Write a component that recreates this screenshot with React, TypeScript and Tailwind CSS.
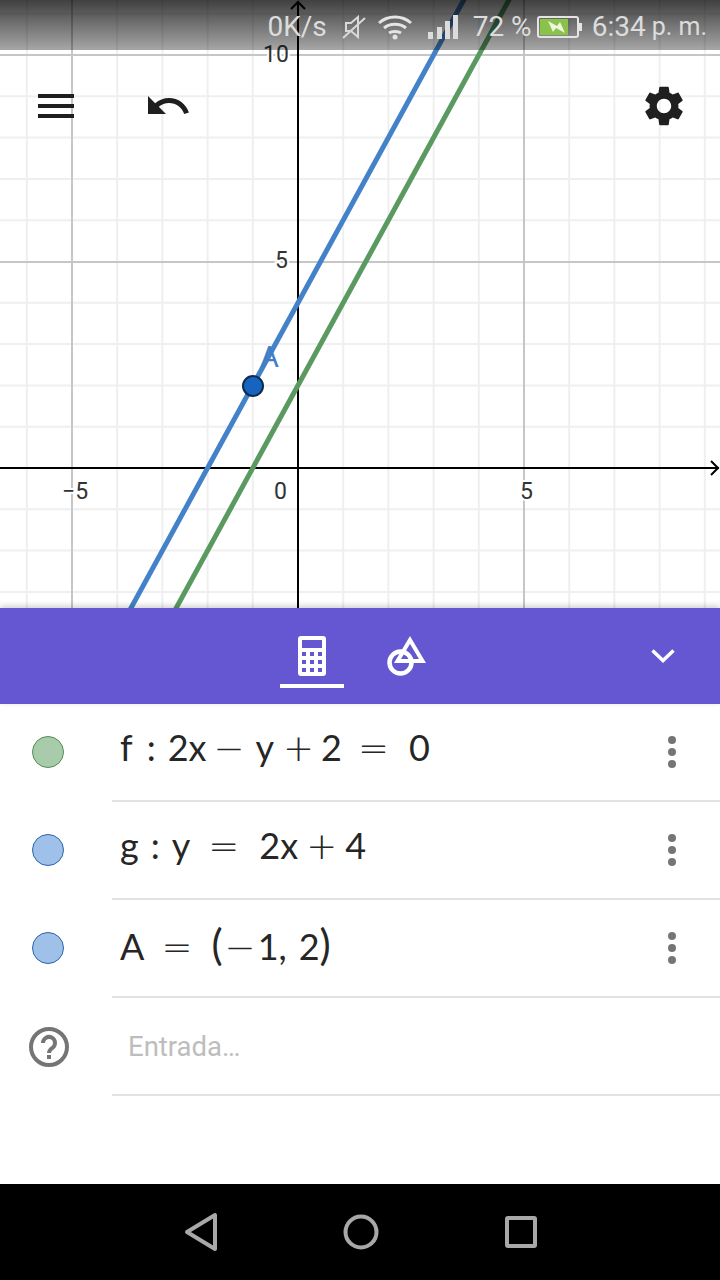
const xLines = [-6, -4, -3, -2, -1, 1, 2, 3, 4, 6, 7, 8, 9]
const yLines = [-3, -2, -1, 1, 2, 3, 4, 6, 7, 8, 9, 11]

const sx = (x: number) => 298 + x * 45.2
const sy = (y: number) => 468 - y * 41.3

const tick = 'fill-[#333] stroke-white stroke-[4px] [paint-order:stroke]'

function Graph() {
  return (
    <svg viewBox="0 0 720 608" className="block h-[608px] w-[720px]">
      {xLines.map((x) => (
        <line key={x} x1={sx(x)} x2={sx(x)} y1={0} y2={608} stroke="#efefef" strokeWidth={2} />
      ))}
      {yLines.map((y) => (
        <line key={y} x1={0} x2={720} y1={sy(y)} y2={sy(y)} stroke="#efefef" strokeWidth={2} />
      ))}
      <line x1={72} x2={72} y1={0} y2={608} stroke="#c6c6c6" strokeWidth={2} />
      <line x1={524} x2={524} y1={0} y2={608} stroke="#c6c6c6" strokeWidth={2} />
      <line x1={0} x2={720} y1={262} y2={262} stroke="#c6c6c6" strokeWidth={2} />
      <line x1={0} x2={720} y1={55} y2={55} stroke="#c6c6c6" strokeWidth={2} />
      <line x1={298} x2={298} y1={1} y2={608} stroke="#000" strokeWidth={2} />
      <line x1={0} x2={719} y1={468} y2={468} stroke="#000" strokeWidth={2} />
      <path d="M291 9l7-7 7 7M711 461l7 7-7 7" fill="none" stroke="#000" strokeWidth={2} />
      <line x1={sx(-3.75)} y1={sy(-3.5)} x2={sx(3.75)} y2={sy(11.5)} stroke="#4382c8" strokeWidth={5} />
      <line x1={sx(-2.75)} y1={sy(-3.5)} x2={sx(4.75)} y2={sy(11.5)} stroke="#5a9a60" strokeWidth={5} />
      <circle cx={253} cy={386} r={10} fill="#1565c0" stroke="#0d2b4f" strokeWidth={2} />
      <g fontFamily="Roboto, sans-serif" fontSize={23}>
        <text x={263} y={62} className={tick}>10</text>
        <text x={275} y={268} className={tick}>5</text>
        <text x={62} y={499} className={tick}>−5</text>
        <text x={274} y={499} className={tick}>0</text>
        <text x={520} y={499} className={tick}>5</text>
      </g>
      <text x={260} y={367} fontFamily="Roboto, sans-serif" fontSize={29} fill="#3f7fc7">A</text>
    </svg>
  )
}

function StatusBar() {
  return (
    <div className="absolute inset-x-0 top-0 flex h-[50px] items-center justify-end bg-gradient-to-b from-black/75 to-black/35 pr-[13px] pt-[3px] font-['Roboto',sans-serif] text-[28px] leading-none text-[#dcdcdc]">
      <span>0K/s</span>
      <svg viewBox="0 0 24 24" className="ml-[15px] h-6 w-6" fill="none" stroke="#d8d8d8" strokeWidth={2}>
        <path d="M4 8h5l7-6v20l-7-6H4zM1 23L23 3" />
      </svg>
      <svg viewBox="0 0 34 26" className="ml-[12px] h-[26px] w-[34px]" fill="none" stroke="#e4e4e4" strokeWidth={3}>
        <path d="M1 9c9-8 23-8 32 0M6 14c6-5 16-5 22 0M11 19c3-2 9-2 12 0" />
        <circle cx={17} cy={23} r={2.5} fill="#e4e4e4" stroke="none" />
      </svg>
      <svg viewBox="0 0 30 26" className="ml-[16px] h-[26px] w-[30px]" fill="#dcdcdc">
        <rect x={0} y={18} width={5} height={7} />
        <rect x={9} y={13} width={5} height={12} />
        <rect x={17} y={7} width={5} height={18} />
        <rect x={25} y={1} width={5} height={24} />
      </svg>
      <span className="ml-[15px]">72 %</span>
      <svg viewBox="0 0 45 22" className="ml-[5px] h-[22px] w-[45px]">
        <rect x={1} y={1} width={40} height={20} rx={2} fill="none" stroke="#e4e4e4" strokeWidth={2} />
        <rect x={3} y={3} width={28} height={16} fill="#8bc34a" />
        <rect x={42} y={7} width={3} height={8} fill="#e4e4e4" />
        <path d="M11 5l9 5 3-4 5 11-9-5-3 4z" fill="#eef5e0" />
      </svg>
      <span className="ml-[10px]">6:34</span>
      <span className="ml-[6px] text-[25px]">p. m.</span>
    </div>
  )
}

function Marble({ fill, border }: { fill: string; border: string }) {
  return <div className={`h-8 w-8 rounded-full border ${fill} ${border}`} />
}

function Kebab() {
  return (
    <div className="ml-auto mr-[44px] mt-[2px] flex flex-col gap-[4px]">
      <span className="h-2 w-2 rounded-full bg-[#757575]" />
      <span className="h-2 w-2 rounded-full bg-[#757575]" />
      <span className="h-2 w-2 rounded-full bg-[#757575]" />
    </div>
  )
}

function Row({ icon, children, kebab = true }: { icon: React.ReactNode; children: React.ReactNode; kebab?: boolean }) {
  return (
    <div className="flex h-[98px] items-center">
      <div className="flex w-[112px] shrink-0 justify-center pb-[2px] pr-[16px]">{icon}</div>
      <div className="flex h-full flex-1 items-center border-b-2 border-[#e2e2e2] pb-[2px]">
        {children}
        {kebab && <Kebab />}
      </div>
    </div>
  )
}

function Math({ children }: { children: React.ReactNode }) {
  return (
    <div className="mb-[6px] ml-[8px] flex items-baseline whitespace-pre font-['Lato',sans-serif] text-[36px] leading-none text-[#262626]">
      {children}
    </div>
  )
}

function Op({ c, l, r }: { c: string; l: string; r: string }) {
  return <span className={`${l} ${r} font-['DejaVu_Sans',sans-serif] text-[37px] font-extralight`}>{c}</span>
}

export default function App() {
  return (
    <div className="flex h-[1280px] w-[720px] flex-col overflow-hidden bg-white">
      <div className="relative h-[608px] shrink-0">
        <Graph />
        <StatusBar />
        <svg viewBox="0 0 36 24" className="absolute left-[38px] top-[94px] h-6 w-9" fill="#1f1f1f">
          <rect y={0} width={36} height={4} />
          <rect y={10} width={36} height={4} />
          <rect y={20} width={36} height={4} />
        </svg>
        <svg viewBox="0 0 24 24" className="absolute left-[144px] top-[82px] h-12 w-12" fill="#1f1f1f">
          <path d="M12.5 8c-2.65 0-5.05.99-6.9 2.6L2 7v9h9l-3.62-3.62c1.39-1.16 3.16-1.88 5.12-1.88 3.54 0 6.55 2.31 7.6 5.5l2.37-.78C21.08 11.03 17.15 8 12.5 8z" />
        </svg>
        <svg viewBox="0 0 24 24" className="absolute left-[640px] top-[82px] h-12 w-12" fill="#1f1f1f">
          <path d="M19.14 12.94c.04-.3.06-.61.06-.94 0-.32-.02-.64-.07-.94l2.03-1.58c.18-.14.23-.41.12-.61l-1.92-3.32c-.12-.22-.37-.29-.59-.22l-2.39.96c-.5-.38-1.03-.7-1.62-.94l-.36-2.54c-.04-.24-.24-.41-.48-.41h-3.84c-.24 0-.43.17-.47.41l-.36 2.54c-.59.24-1.13.57-1.62.94l-2.39-.96c-.22-.08-.47 0-.59.22L2.74 8.87c-.12.21-.08.47.12.61l2.03 1.58c-.05.3-.09.63-.09.94s.02.64.07.94l-2.03 1.58c-.18.14-.23.41-.12.61l1.92 3.32c.12.22.37.29.59.22l2.39-.96c.5.38 1.03.7 1.62.94l.36 2.54c.05.24.24.41.48.41h3.84c.24 0 .44-.17.47-.41l.36-2.54c.59-.24 1.13-.56 1.62-.94l2.39.96c.22.08.47 0 .59-.22l1.92-3.32c.12-.22.07-.47-.12-.61l-2.01-1.58zM12 15.6c-1.98 0-3.6-1.62-3.6-3.6s1.62-3.6 3.6-3.6 3.6 1.62 3.6 3.6-1.62 3.6-3.6 3.6z" />
        </svg>
      </div>

      <div className="relative flex h-[96px] shrink-0 bg-[#6557d2] shadow-[0_-2px_6px_rgba(0,0,0,0.2)]">
        <div className="ml-[280px] flex h-[80px] w-[64px] items-end justify-center border-b-4 border-white pb-[8px]">
          <svg viewBox="0 0 28 40" className="h-10 w-7">
            <path
              fill="#fff"
              fillRule="evenodd"
              d="M3 0h22a3 3 0 0 1 3 3v34a3 3 0 0 1-3 3H3a3 3 0 0 1-3-3V3a3 3 0 0 1 3-3zM4 4v8h20V4zM4 16v4h4v-4zM12 16v4h4v-4zM20 16v4h4v-4zM4 24v4h4v-4zM12 24v4h4v-4zM20 24v4h4v-4zM4 32v4h4v-4zM12 32v4h4v-4zM20 32v4h4v-4z"
            />
          </svg>
        </div>
        <svg viewBox="0 0 42 42" className="ml-[41px] mt-[27px] h-[42px] w-[42px]" fill="none" stroke="#fff" strokeWidth={4.5}>
          <circle cx={15.5} cy={27.5} r={11} />
          <path d="M25 5l12.5 21H12.5z" strokeWidth={4} />
        </svg>
        <svg viewBox="0 0 24 14" className="ml-[224px] mt-[41px] h-[14px] w-6" fill="none" stroke="#fff" strokeWidth={3.5}>
          <path d="M1.5 1.5L12 11.5 22.5 1.5" />
        </svg>
      </div>

      <div className="flex-1">
        <Row icon={<Marble fill="bg-[#a9cbaa]" border="border-[#4f8f55]" />}>
          <Math>
            f
            <span className="ml-[14px]">:</span>
            <span className="ml-[12px]">2x</span>
            <Op c="−" l="ml-[7px]" r="mr-[11px]" />
            y
            <Op c="+" l="ml-[9px]" r="mr-[7px]" />
            2
            <Op c="=" l="ml-[16px]" r="mr-[20px]" />
            0
          </Math>
        </Row>
        <Row icon={<Marble fill="bg-[#9fc0e8]" border="border-[#2a66ad]" />}>
          <Math>
            g
            <span className="ml-[12px]">:</span>
            <span className="ml-[12px]">y</span>
            <Op c="=" l="ml-[18px]" r="mr-[20px]" />
            2x
            <Op c="+" l="ml-[8px]" r="mr-[8px]" />
            4
          </Math>
        </Row>
        <Row icon={<Marble fill="bg-[#9fc0e8]" border="border-[#2a66ad]" />}>
          <Math>
            A
            <Op c="=" l="ml-[17px]" r="mr-[19px]" />
            <span className="text-[42px]">(</span>
            <Op c="−" l="ml-[2px]" r="mr-[2px]" />
            1,
            <span className="ml-[12px]">2</span>
            <span className="text-[42px]">)</span>
          </Math>
        </Row>
        <Row
          kebab={false}
          icon={
            <svg viewBox="0 0 40 40" className="ml-[2px] mt-[2px] h-10 w-10" fill="none">
              <circle cx={20} cy={20} r={18} stroke="#757575" strokeWidth={4} />
              <path d="M14 16a6 6 0 1 1 9.5 4.8c-2 1.4-3.5 2.4-3.5 5.2" stroke="#757575" strokeWidth={4} />
              <rect x={18} y={28} width={4} height={4} fill="#757575" />
            </svg>
          }
        >
          <span className="ml-[16px] mt-[3px] font-['Roboto',sans-serif] text-[27.5px] text-[#bdbdbd]">Entrada…</span>
        </Row>
      </div>

      <div className="flex h-[96px] shrink-0 items-center bg-black">
        <svg viewBox="0 0 36 40" className="ml-[183px] h-10 w-9" fill="none" stroke="#a8a8a8" strokeWidth={4} strokeLinejoin="round">
          <path d="M32 3v34L4 20z" />
        </svg>
        <svg viewBox="0 0 36 36" className="ml-[124px] h-9 w-9" fill="none" stroke="#a8a8a8" strokeWidth={4}>
          <circle cx={18} cy={18} r={15.5} />
        </svg>
        <svg viewBox="0 0 32 32" className="ml-[126px] h-8 w-8" fill="none" stroke="#a8a8a8" strokeWidth={4}>
          <rect x={2} y={2} width={28} height={28} rx={1} />
        </svg>
      </div>
    </div>
  )
}
